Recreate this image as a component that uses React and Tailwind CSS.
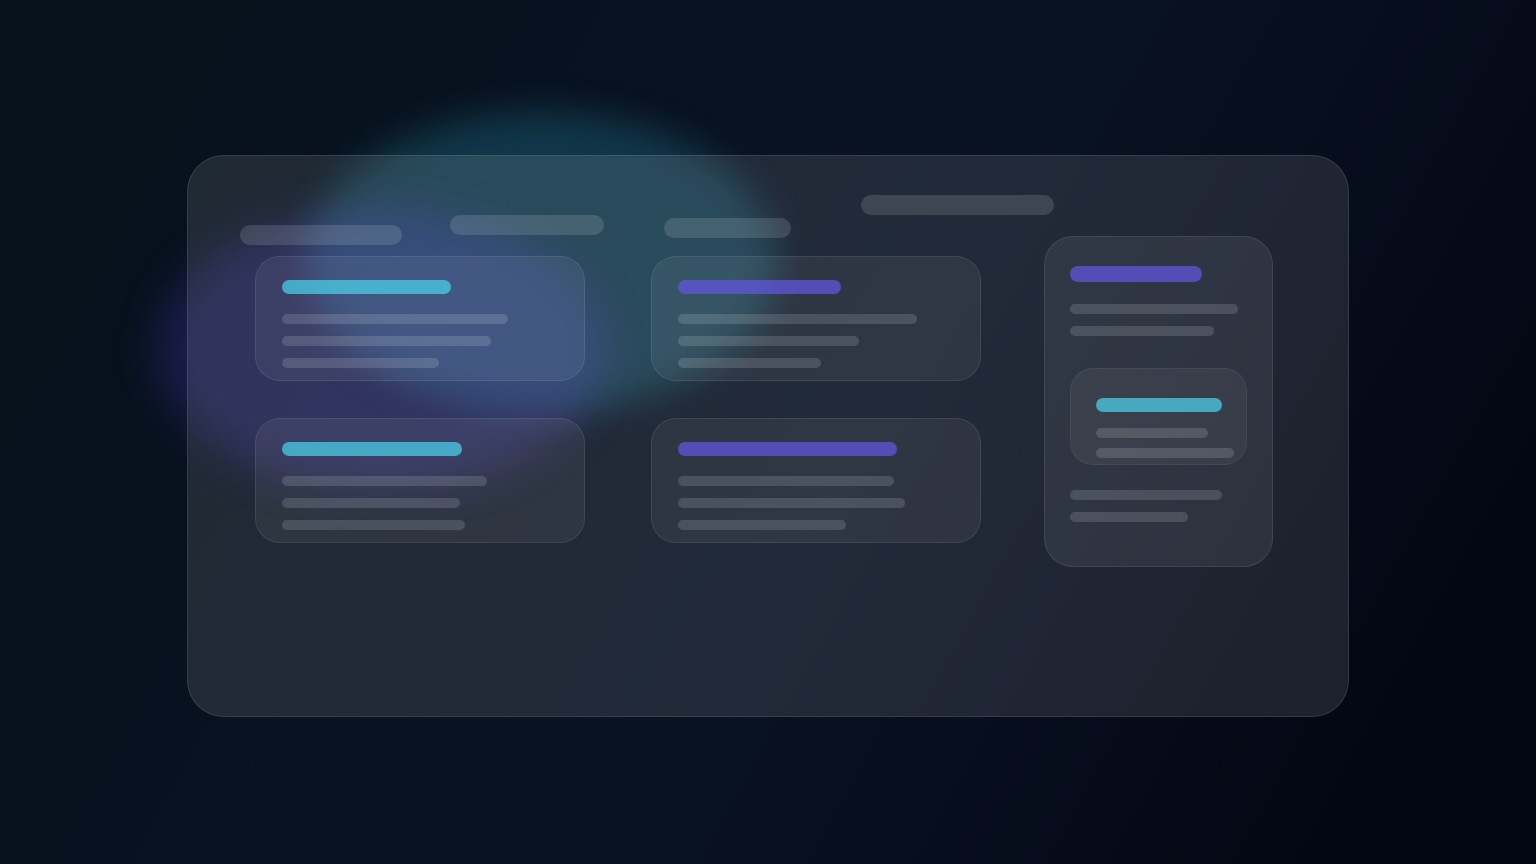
import React from 'react';
import clsx from 'clsx';

const cards = [
  { accent: 'cyan', title: 'w-[169px]', lines: ['w-[226px]', 'w-[209px]', 'w-[157px]'] },
  { accent: 'violet', title: 'w-[163px]', lines: ['w-[239px]', 'w-[181px]', 'w-[143px]'] },
  { accent: 'cyan', title: 'w-[180px]', lines: ['w-[205px]', 'w-[178px]', 'w-[183px]'] },
  { accent: 'violet', title: 'w-[219px]', lines: ['w-[216px]', 'w-[227px]', 'w-[168px]'] }
];

const Line = ({ width, className = 'bg-white/[0.14]' }) => (
  <div className={clsx('h-[10px] rounded-full', className, width)} />
);

const Title = ({ width, accent, height = 'h-[14px]' }) => (
  <div
    className={clsx(
      'rounded-full',
      height,
      width,
      accent === 'cyan' ? 'bg-[#4acde6]/75' : 'bg-[#6156dc]/75'
    )}
  />
);

const Card = ({ accent, title, lines }) => (
  <article className="h-[125px] rounded-[25px] border border-white/[0.09] bg-white/[0.06] px-[26px] pt-[23px]">
    <Title accent={accent} width={title} />
    <div className="mt-5 flex flex-col gap-3">
      {lines.map((width) => (
        <Line key={width} width={width} />
      ))}
    </div>
  </article>
);

const Sidebar = () => (
  <aside className="h-[331px] w-[229px] shrink-0 rounded-[29px] border border-white/[0.09] bg-white/[0.07] px-[25px] pt-[29px]">
    <Title accent="violet" width="w-[132px]" height="h-4" />
    <div className="mt-[22px] flex flex-col gap-3">
      <Line width="w-[168px]" />
      <Line width="w-[144px]" />
    </div>
    <div className="mt-8 h-[97px] rounded-[23px] border border-white/[0.06] bg-white/[0.05] px-[25px] pt-[29px]">
      <Title accent="cyan" width="w-[126px]" />
      <div className="mt-4 flex flex-col gap-[10px]">
        <Line width="w-[112px]" />
        <Line width="w-[138px]" />
      </div>
    </div>
    <div className="mt-[25px] flex flex-col gap-3">
      <Line width="w-[152px]" />
      <Line width="w-[118px]" />
    </div>
  </aside>
);

const Chip = ({ className }) => (
  <div className={clsx('h-5 rounded-full bg-white/[0.13]', className)} />
);

const App = () => {
  return (
    <div className="relative flex min-h-screen justify-center overflow-hidden bg-[linear-gradient(119deg,#06111b_0%,#091223_55%,#020612_92%)] px-8 py-[155px]">
      <div className="absolute top-[112px] left-[306px] h-[300px] w-[470px] rounded-[50%] bg-[#38cdee]/20 blur-[18px]" />
      <div className="absolute top-[210px] left-[156px] h-[280px] w-[450px] rounded-[50%] bg-[#5b45e8]/22 blur-[20px]" />

      <main className="relative min-h-[562px] w-full max-w-[1162px] rounded-[37px] border border-white/10 bg-white/10">
        <div className="flex items-start pt-[39px] pl-[52px]">
          <Chip className="mt-[30px] w-[162px]" />
          <Chip className="mt-5 ml-12 w-[154px]" />
          <Chip className="mt-[23px] ml-[60px] w-[127px]" />
          <Chip className="ml-[70px] w-[193px]" />
        </div>
        <div className="-mt-[9px] flex items-start gap-[63px] pr-[75px] pl-[67px]">
          <section className="mt-5 grid flex-1 grid-cols-2 gap-x-[66px] gap-y-[37px]">
            {cards.map((card) => (
              <Card key={card.title} {...card} />
            ))}
          </section>
          <Sidebar />
        </div>
      </main>
    </div>
  );
};

export default App;
